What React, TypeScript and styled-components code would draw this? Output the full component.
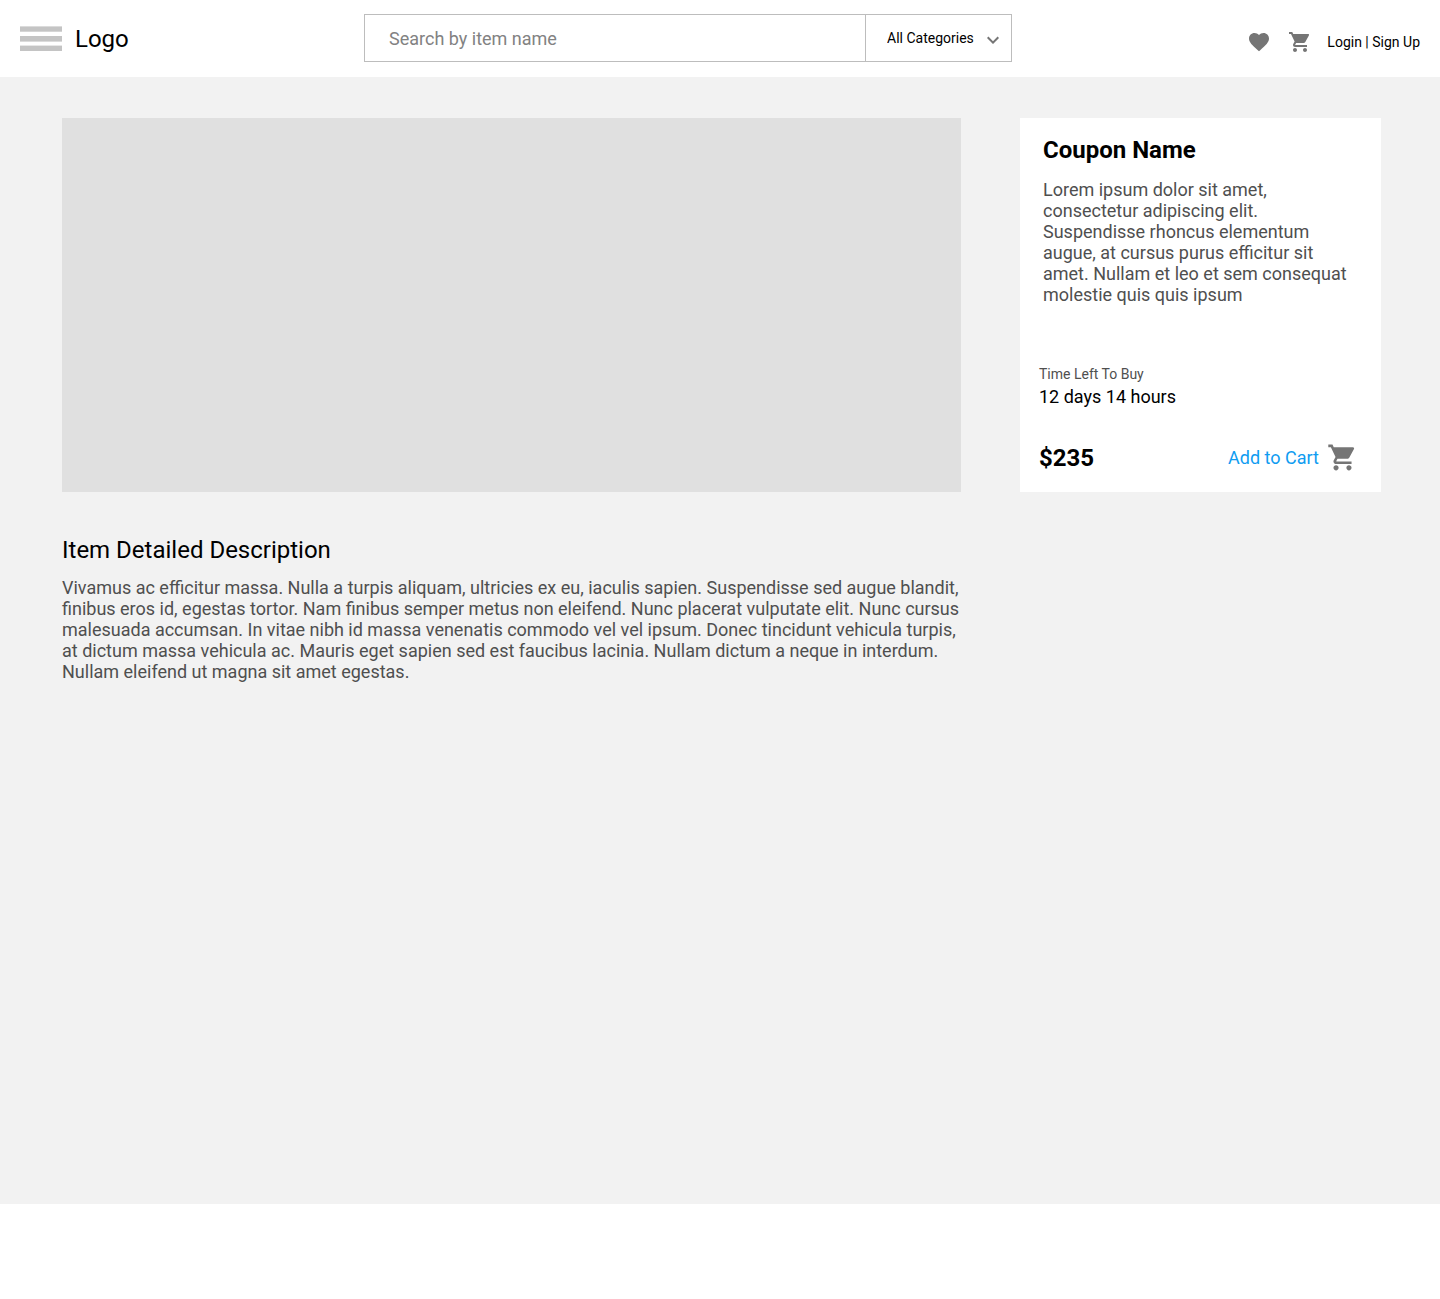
import React from 'react';
import styled, { createGlobalStyle } from 'styled-components';
import { MdExpandMore, MdFavorite, MdShoppingCart } from 'react-icons/md';

const GlobalStyle = createGlobalStyle`
  *, *::before, *::after { box-sizing: border-box; }
  body {
    margin: 0;
    background: #fff;
    color: #000;
    font-family: Roboto, 'Liberation Sans', sans-serif;
  }
  h1, h2, p, dl, dd { margin: 0; }
  button, input, select { font-family: inherit; }
`;

const Page = styled.div`
  display: flex;
  flex-direction: column;
  min-height: 100vh;
`;

const Header = styled.header`
  display: flex;
  align-items: center;
  padding: 14px 20px 15px;
`;

const Brand = styled.div`
  display: flex;
  align-items: center;
  gap: 13px;
  flex: 0 1 344px;
  padding-top: 1px;
`;

const IconButton = styled.button`
  display: flex;
  padding: 0;
  border: 0;
  background: none;
  color: #757575;
  cursor: pointer;
`;

const Logo = styled.a`
  color: inherit;
  font-size: 24px;
  line-height: 28px;
  text-decoration: none;
`;

const SearchBar = styled.form`
  display: flex;
  flex: 1 1 auto;
  max-width: 648px;
  height: 48px;
  border: 1px solid #bdbdbd;
`;

const SearchInput = styled.input`
  flex: 1;
  min-width: 0;
  padding: 0 24px;
  border: 0;
  background: none;
  font-size: 18px;
  line-height: 21px;
  outline-offset: -2px;
  &::placeholder { color: #828282; opacity: 1; }
`;

const CategoryField = styled.div`
  position: relative;
  display: flex;
  flex: 0 0 146px;
  border-left: 1px solid #bdbdbd;
`;

const CategorySelect = styled.select`
  width: 100%;
  padding: 0 32px 0 21px;
  border: 0;
  border-radius: 0;
  appearance: none;
  background: none;
  color: #000;
  font-size: 14px;
  line-height: 16px;
`;

const Chevron = styled(MdExpandMore)`
  position: absolute;
  top: 13px;
  right: 6px;
  color: #757575;
  pointer-events: none;
`;

const Actions = styled.nav`
  display: flex;
  align-items: center;
  margin: 8px 0 0 auto;
  gap: 15px;
`;

const IconGroup = styled.div`
  display: flex;
  gap: 17px;
`;

const Account = styled.div`
  font-size: 14px;
  line-height: 16px;
  white-space: nowrap;
`;

const AccountLink = styled.a`
  color: inherit;
  text-decoration: none;
`;

const Main = styled.main`
  display: grid;
  flex: 1;
  grid-template-columns: minmax(0, 1fr) 361px;
  align-content: start;
  gap: 44px 59px;
  padding: 41px 59px 41px 62px;
  background: #f2f2f2;
`;

const Preview = styled.div`
  min-height: 374px;
  background: #e0e0e0;
`;

const Card = styled.aside`
  display: flex;
  flex-direction: column;
  padding: 18px 19px 19px;
  background: #fff;
`;

const Summary = styled.div`
  padding: 0 4px;
`;

const CouponName = styled.h1`
  margin-bottom: 15px;
  font-size: 24px;
  font-weight: 700;
  line-height: 28px;
`;

const Copy = styled.p`
  color: #4f4f4f;
  font-size: 18px;
  line-height: 21px;
`;

const TimeLeft = styled.dl`
  margin-top: auto;
`;

const TimeLabel = styled.dt`
  margin-bottom: 4px;
  color: #4f4f4f;
  font-size: 14px;
  line-height: 16px;
`;

const TimeValue = styled.dd`
  font-size: 18px;
  line-height: 21px;
`;

const Purchase = styled.div`
  display: flex;
  align-items: center;
  justify-content: space-between;
  margin-top: 35px;
  padding-right: 4px;
`;

const Price = styled.strong`
  font-size: 24px;
  line-height: 28px;
`;

const AddToCart = styled(IconButton)`
  align-items: center;
  gap: 8px;
  font-size: 18px;
  line-height: 21px;
`;

const AddLabel = styled.span`
  color: #109cf1;
`;

const SectionTitle = styled.h2`
  margin-bottom: 13px;
  font-size: 24px;
  font-weight: 400;
  line-height: 28px;
`;

const Footer = styled.footer`
  height: 95px;
`;

const MenuIcon = () => (
  <svg width="42" height="25" viewBox="0 0 42 25" fill="#c4c4c4" aria-hidden="true">
    <rect y="0.4" width="42" height="5.3" />
    <rect y="10" width="42" height="5.6" />
    <rect y="19.6" width="42" height="5.4" />
  </svg>
);

export default function App() {
  return (
    <>
      <GlobalStyle />
      <Page>
        <Header>
          <Brand>
            <IconButton type="button" aria-label="Menu"><MenuIcon /></IconButton>
            <Logo href="#">Logo</Logo>
          </Brand>
          <SearchBar role="search" onSubmit={(e) => e.preventDefault()}>
            <SearchInput type="text" aria-label="Search" placeholder="Search by item name" />
            <CategoryField>
              <CategorySelect aria-label="Category">
                <option>All Categories</option>
              </CategorySelect>
              <Chevron size={24} aria-hidden="true" />
            </CategoryField>
          </SearchBar>
          <Actions>
            <IconGroup>
              <IconButton type="button" aria-label="Favorites"><MdFavorite size={24} /></IconButton>
              <IconButton type="button" aria-label="Cart"><MdShoppingCart size={24} /></IconButton>
            </IconGroup>
            <Account>
              <AccountLink href="#login">Login</AccountLink> | <AccountLink href="#signup">Sign Up</AccountLink>
            </Account>
          </Actions>
        </Header>
        <Main>
          <Preview />
          <Card>
            <Summary>
              <CouponName>Coupon Name</CouponName>
              <Copy>
                Lorem ipsum dolor sit amet, consectetur adipiscing elit. Suspendisse rhoncus elementum
                augue, at cursus purus efficitur sit amet. Nullam et leo et sem consequat molestie quis
                quis ipsum
              </Copy>
            </Summary>
            <TimeLeft>
              <TimeLabel>Time Left To Buy</TimeLabel>
              <TimeValue>12 days 14 hours</TimeValue>
            </TimeLeft>
            <Purchase>
              <Price>$235</Price>
              <AddToCart type="button">
                <AddLabel>Add to Cart</AddLabel>
                <MdShoppingCart size={31} aria-hidden="true" />
              </AddToCart>
            </Purchase>
          </Card>
          <section>
            <SectionTitle>Item Detailed Description</SectionTitle>
            <Copy>
              Vivamus ac efficitur massa. Nulla a turpis aliquam, ultricies ex eu, iaculis sapien.
              Suspendisse sed augue blandit, finibus eros id, egestas tortor. Nam finibus semper metus
              non eleifend. Nunc placerat vulputate elit. Nunc cursus malesuada accumsan. In vitae nibh
              id massa venenatis commodo vel vel ipsum. Donec tincidunt vehicula turpis, at dictum massa
              vehicula ac. Mauris eget sapien sed est faucibus lacinia. Nullam dictum a neque in
              interdum. Nullam eleifend ut magna sit amet egestas.
            </Copy>
          </section>
        </Main>
        <Footer />
      </Page>
    </>
  );
}
